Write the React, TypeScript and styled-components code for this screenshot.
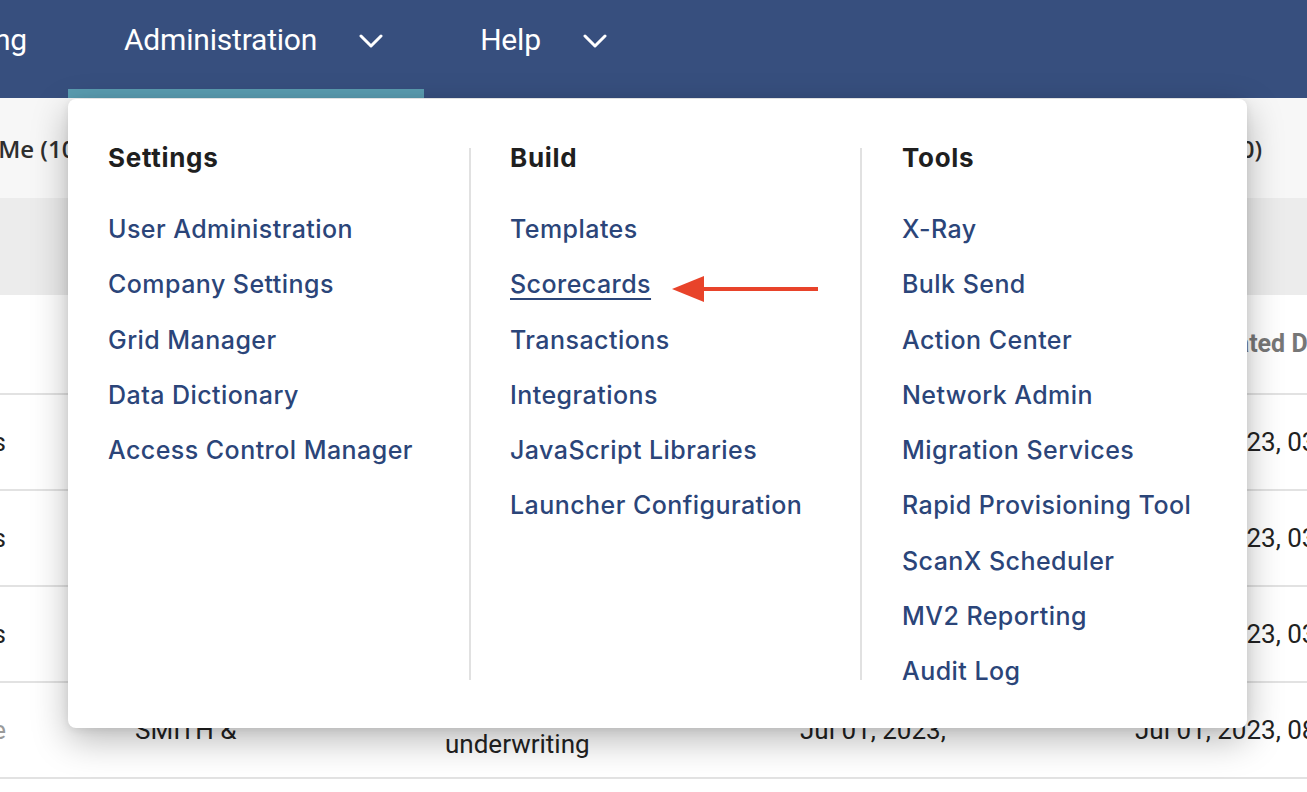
import React from 'react';
import styled, { createGlobalStyle } from 'styled-components';

const GlobalStyle = createGlobalStyle`
  html, body {
    margin: 0;
    padding: 0;
  }
  body {
    background: #ffffff;
    font-family: Roboto, 'Liberation Sans', sans-serif;
    overflow: hidden;
  }
`;

const settingsLinks = [
  'User Administration',
  'Company Settings',
  'Grid Manager',
  'Data Dictionary',
  'Access Control Manager',
];

const buildLinks = [
  'Templates',
  'Scorecards',
  'Transactions',
  'Integrations',
  'JavaScript Libraries',
  'Launcher Configuration',
];

const toolLinks = [
  'X-Ray',
  'Bulk Send',
  'Action Center',
  'Network Admin',
  'Migration Services',
  'Rapid Provisioning Tool',
  'ScanX Scheduler',
  'MV2 Reporting',
  'Audit Log',
];

const rows = [
  ['Pending Reviews', 'ACME HOLDINGS', 'Renewal', 'Jun 28, 2023,', 'Jul 01, 2023, 03:14 PM'],
  ['Open Items', 'BLUE RIVER LLC', 'New business', 'Jun 29, 2023,', 'Jul 01, 2023, 03:22 PM'],
  ['Open Items', 'NORTHWIND', 'Endorsement', 'Jun 30, 2023,', 'Jul 01, 2023, 03:40 PM'],
  ['Complete', 'SMITH &', 'Commercial\nunderwriting', 'Jul 01, 2023,', 'Jul 01, 2023, 08:05 AM'],
];

const Chevron: React.FC = () => (
  <svg width="24" height="14" viewBox="0 0 24 14" fill="none">
    <polyline
      points="2,2 12,12 22,2"
      stroke="#ffffff"
      strokeWidth="3"
      strokeLinecap="round"
      strokeLinejoin="round"
    />
  </svg>
);

const Arrow: React.FC = () => (
  <svg width="148" height="28" viewBox="0 0 148 28">
    <line x1="28" y1="14" x2="146" y2="14" stroke="#e8432a" strokeWidth="4" />
    <polygon points="0,14 32,1 32,27" fill="#e8432a" />
  </svg>
);

const App: React.FC = () => {
  return (
    <Page>
      <GlobalStyle />
      <TopBar>
        <NavItem $clipped>Reporting</NavItem>
        <NavItem $active $padRight={41}>
          Administration
          <Chevron />
        </NavItem>
        <NavItem $padRight={40} $padLeft={56}>
          Help
          <Chevron />
        </NavItem>
      </TopBar>

      <TabsBar>
        <Tab $clipped>Assigned to Me (10)</Tab>
        <Tab>All Tasks (120)</Tab>
      </TabsBar>
      <FilterBand />
      <HeaderRow>
        <Cell />
        <Cell>Account</Cell>
        <Cell>Type</Cell>
        <Cell>Received</Cell>
        <Cell $indent={62}>Created Date</Cell>
      </HeaderRow>
      {rows.map((r, i) => (
        <Row key={i}>
          <Cell $clip $faint={i === 3}>{r[0]}</Cell>
          <Cell>{r[1]}</Cell>
          <Cell>{r[2]}</Cell>
          <Cell>{r[3]}</Cell>
          <Cell>{r[4]}</Cell>
        </Row>
      ))}

      <Dropdown>
        <Column $width={401} $padLeft={40}>
          <Heading>Settings</Heading>
          <LinkList>
            {settingsLinks.map((l) => (
              <MenuLink key={l} href="#">{l}</MenuLink>
            ))}
          </LinkList>
        </Column>
        <Divider />
        <Column $width={389} $padLeft={39}>
          <Heading>Build</Heading>
          <LinkList>
            {buildLinks.map((l) =>
              l === 'Scorecards' ? (
                <LinkWithNote key={l}>
                  <MenuLink href="#" $underline>{l}</MenuLink>
                  <Arrow />
                </LinkWithNote>
              ) : (
                <MenuLink key={l} href="#">{l}</MenuLink>
              )
            )}
          </LinkList>
        </Column>
        <Divider />
        <Column $width={385} $padLeft={40}>
          <Heading>Tools</Heading>
          <LinkList>
            {toolLinks.map((l) => (
              <MenuLink key={l} href="#">{l}</MenuLink>
            ))}
          </LinkList>
        </Column>
      </Dropdown>
    </Page>
  );
};

const Page = styled.div`
  position: relative;
  width: 1307px;
  height: 792px;
  overflow: hidden;
  display: flex;
  flex-direction: column;
`;

const TopBar = styled.nav`
  height: 98px;
  flex-shrink: 0;
  display: flex;
  align-items: stretch;
  background: #374f7e;
`;

const NavItem = styled.div<{ $active?: boolean; $clipped?: boolean; $padRight?: number; $padLeft?: number }>`
  display: flex;
  align-items: center;
  justify-content: ${(p) => (p.$clipped ? 'flex-end' : 'flex-start')};
  gap: 42px;
  box-sizing: border-box;
  flex-shrink: 0;
  width: ${(p) => (p.$clipped ? '68px' : 'auto')};
  overflow: hidden;
  padding: 0 ${(p) => (p.$clipped ? 41 : p.$padRight ?? 40)}px 19px ${(p) => (p.$clipped ? 0 : p.$padLeft ?? 56)}px;
  color: #ffffff;
  font-family: Roboto, sans-serif;
  font-size: 30px;
  letter-spacing: -0.2px;
  white-space: nowrap;
  box-shadow: ${(p) => (p.$active ? 'inset 0 -9px 0 #5a9cb0' : 'none')};

  svg {
    flex-shrink: 0;
    margin-top: 2px;
  }
`;

const TabsBar = styled.div`
  height: 100px;
  flex-shrink: 0;
  display: flex;
  align-items: center;
  justify-content: space-between;
  padding-right: 45px;
  background: #f7f7f7;
  font-family: 'Open Sans', sans-serif;
  font-weight: 600;
  font-size: 24px;
  color: #2f2f2f;
`;

const Tab = styled.div<{ $clipped?: boolean }>`
  display: flex;
  justify-content: flex-end;
  white-space: nowrap;
  box-sizing: border-box;
  width: ${(p) => (p.$clipped ? '90px' : 'auto')};
  padding-right: ${(p) => (p.$clipped ? '7px' : '0')};
`;

const FilterBand = styled.div`
  height: 97px;
  flex-shrink: 0;
  background: #ececec;
`;

const grid = `
  display: grid;
  grid-template-columns: 135px 310px 355px 335px 1fr;
  flex-shrink: 0;
  box-sizing: border-box;
  border-bottom: 2px solid #e2e2e2;
`;

const HeaderRow = styled.div`
  ${grid};
  height: 100px;
  font-family: Roboto, sans-serif;
  font-weight: 700;
  font-size: 25px;
  color: #777777;
`;

const Row = styled.div`
  ${grid};
  height: 96px;
  font-family: Roboto, sans-serif;
  font-size: 26px;
  color: #222222;
`;

const Cell = styled.div<{ $clip?: boolean; $faint?: boolean; $indent?: number }>`
  display: flex;
  align-items: center;
  justify-content: ${(p) => (p.$clip ? 'flex-end' : 'flex-start')};
  padding-right: ${(p) => (p.$clip ? '129px' : '0')};
  padding-left: ${(p) => p.$indent ?? 0}px;
  white-space: pre;
  line-height: 28px;
  overflow: visible;
  color: ${(p) => (p.$faint ? '#9a9a9a' : 'inherit')};
`;

const Dropdown = styled.div`
  position: absolute;
  top: 99px;
  left: 68px;
  width: 1179px;
  height: 629px;
  box-sizing: border-box;
  padding-top: 44px;
  display: flex;
  align-items: flex-start;
  background: #ffffff;
  border-radius: 8px;
  box-shadow: 0 12px 36px rgba(0, 0, 0, 0.28), 0 2px 8px rgba(0, 0, 0, 0.08);
`;

const Column = styled.div<{ $width: number; $padLeft: number }>`
  width: ${(p) => p.$width}px;
  box-sizing: border-box;
  padding-left: ${(p) => p.$padLeft}px;
  display: flex;
  flex-direction: column;
  flex-shrink: 0;
`;

const Divider = styled.div`
  width: 2px;
  height: 532px;
  margin-top: 5px;
  flex-shrink: 0;
  background: #e1e1e1;
`;

const Heading = styled.div`
  font-family: Inter, sans-serif;
  font-weight: 700;
  font-size: 26px;
  letter-spacing: 0.7px;
  line-height: 30px;
  color: #1f1f1f;
  margin-bottom: 41px;
`;

const LinkList = styled.div`
  display: flex;
  flex-direction: column;
  align-items: flex-start;
  gap: 25.25px;
`;

const LinkWithNote = styled.div`
  display: flex;
  align-items: center;
  gap: 21px;
  height: 30px;

  svg {
    margin-top: 10px;
    flex-shrink: 0;
  }
`;

const MenuLink = styled.a<{ $underline?: boolean }>`
  font-family: Inter, sans-serif;
  font-weight: 500;
  font-size: 25px;
  letter-spacing: 0.45px;
  line-height: 30px;
  color: #2b4579;
  white-space: nowrap;
  text-decoration: ${(p) => (p.$underline ? 'underline' : 'none')};
  text-decoration-thickness: 2px;
  text-underline-offset: 5px;
`;

export default App;
